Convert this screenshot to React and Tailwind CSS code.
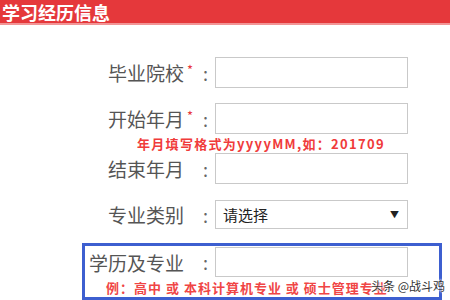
export default function App() {
  const cjk = { fontFamily: '"Noto Sans CJK SC", "Liberation Sans", sans-serif' };

  const Label = ({ text, star }) => (
    <div className="flex items-center h-full">
      <div className="w-[184px] text-right text-[19px] leading-none text-[#555]">{text}</div>
      <div className="w-[31px] flex items-center">
        <span className={`w-[8px] text-[13px] leading-none -mt-[7px] ml-[3px] ${star ? 'text-[#e8363c]' : 'text-transparent'}`}>*</span>
        <span className="ml-[8px] text-[18px] leading-none text-[#666]">:</span>
      </div>
    </div>
  );

  return (
    <div className="w-[450px] h-[300px] bg-white overflow-hidden" style={cjk}>
      <div className="h-[25px] bg-[#e5383b] border-b-2 border-[#f29596] flex items-center pl-[2px]">
        <span className="text-white text-[18px] font-bold leading-none">学习经历信息</span>
      </div>

      <div className="flex flex-col pt-[32px]">
        <div className="flex items-center h-[31px]">
          <Label text="毕业院校" star />
          <div className="w-[193px] h-[31px] border border-[#c9c9c9] bg-white"></div>
        </div>

        <div className="flex items-center h-[31px] mt-[15px]">
          <Label text="开始年月" star />
          <div className="w-[193px] h-[31px] border border-[#c9c9c9] bg-white"></div>
        </div>
        <div className="h-[19px] pl-[137px] flex items-center text-[13px] font-bold text-[#f03b3b] leading-none tracking-[1.3px] whitespace-nowrap">
          年月填写格式为yyyyMM,如：201709
        </div>

        <div className="flex items-center h-[31px]">
          <Label text="结束年月" />
          <div className="w-[193px] h-[31px] border border-[#c9c9c9] bg-white"></div>
        </div>

        <div className="flex items-center h-[29px] mt-[16px]">
          <Label text="专业类别" />
          <div className="w-[193px] h-[29px] border border-[#c9c9c9] bg-white flex items-center justify-between pl-[7px] pr-[8px]">
            <span className="text-[15px] text-[#222] leading-none">请选择</span>
            <span className="text-[9px] text-[#222] leading-none">▼</span>
          </div>
        </div>

        <div className="ml-[82px] mt-[14px] w-[360px] h-[57px] border-[3px] border-[#3d5fd0] flex flex-col overflow-hidden">
          <div className="flex items-center h-[30px] mt-[1px] -ml-[85px]">
            <Label text="学历及专业" />
            <div className="w-[193px] h-[30px] border border-[#c9c9c9] bg-white"></div>
          </div>
          <div className="flex items-center h-[20px] pl-[21px] whitespace-nowrap">
            <span className="text-[13px] font-bold text-[#f04545] leading-none tracking-[1px]">例：高中 或 本科计算机专业 或 硕士管理专业</span>
          </div>
        </div>
      </div>
      <div className="relative">
        <span
          className="absolute left-[371px] -top-[20px] text-[12px] text-[#333] leading-none whitespace-nowrap"
          style={{ textShadow: '0 0 2px #fff, 0 0 2px #fff, 0 0 3px #fff' }}
        >
          头条 @战斗鸡
        </span>
      </div>
    </div>
  );
}
